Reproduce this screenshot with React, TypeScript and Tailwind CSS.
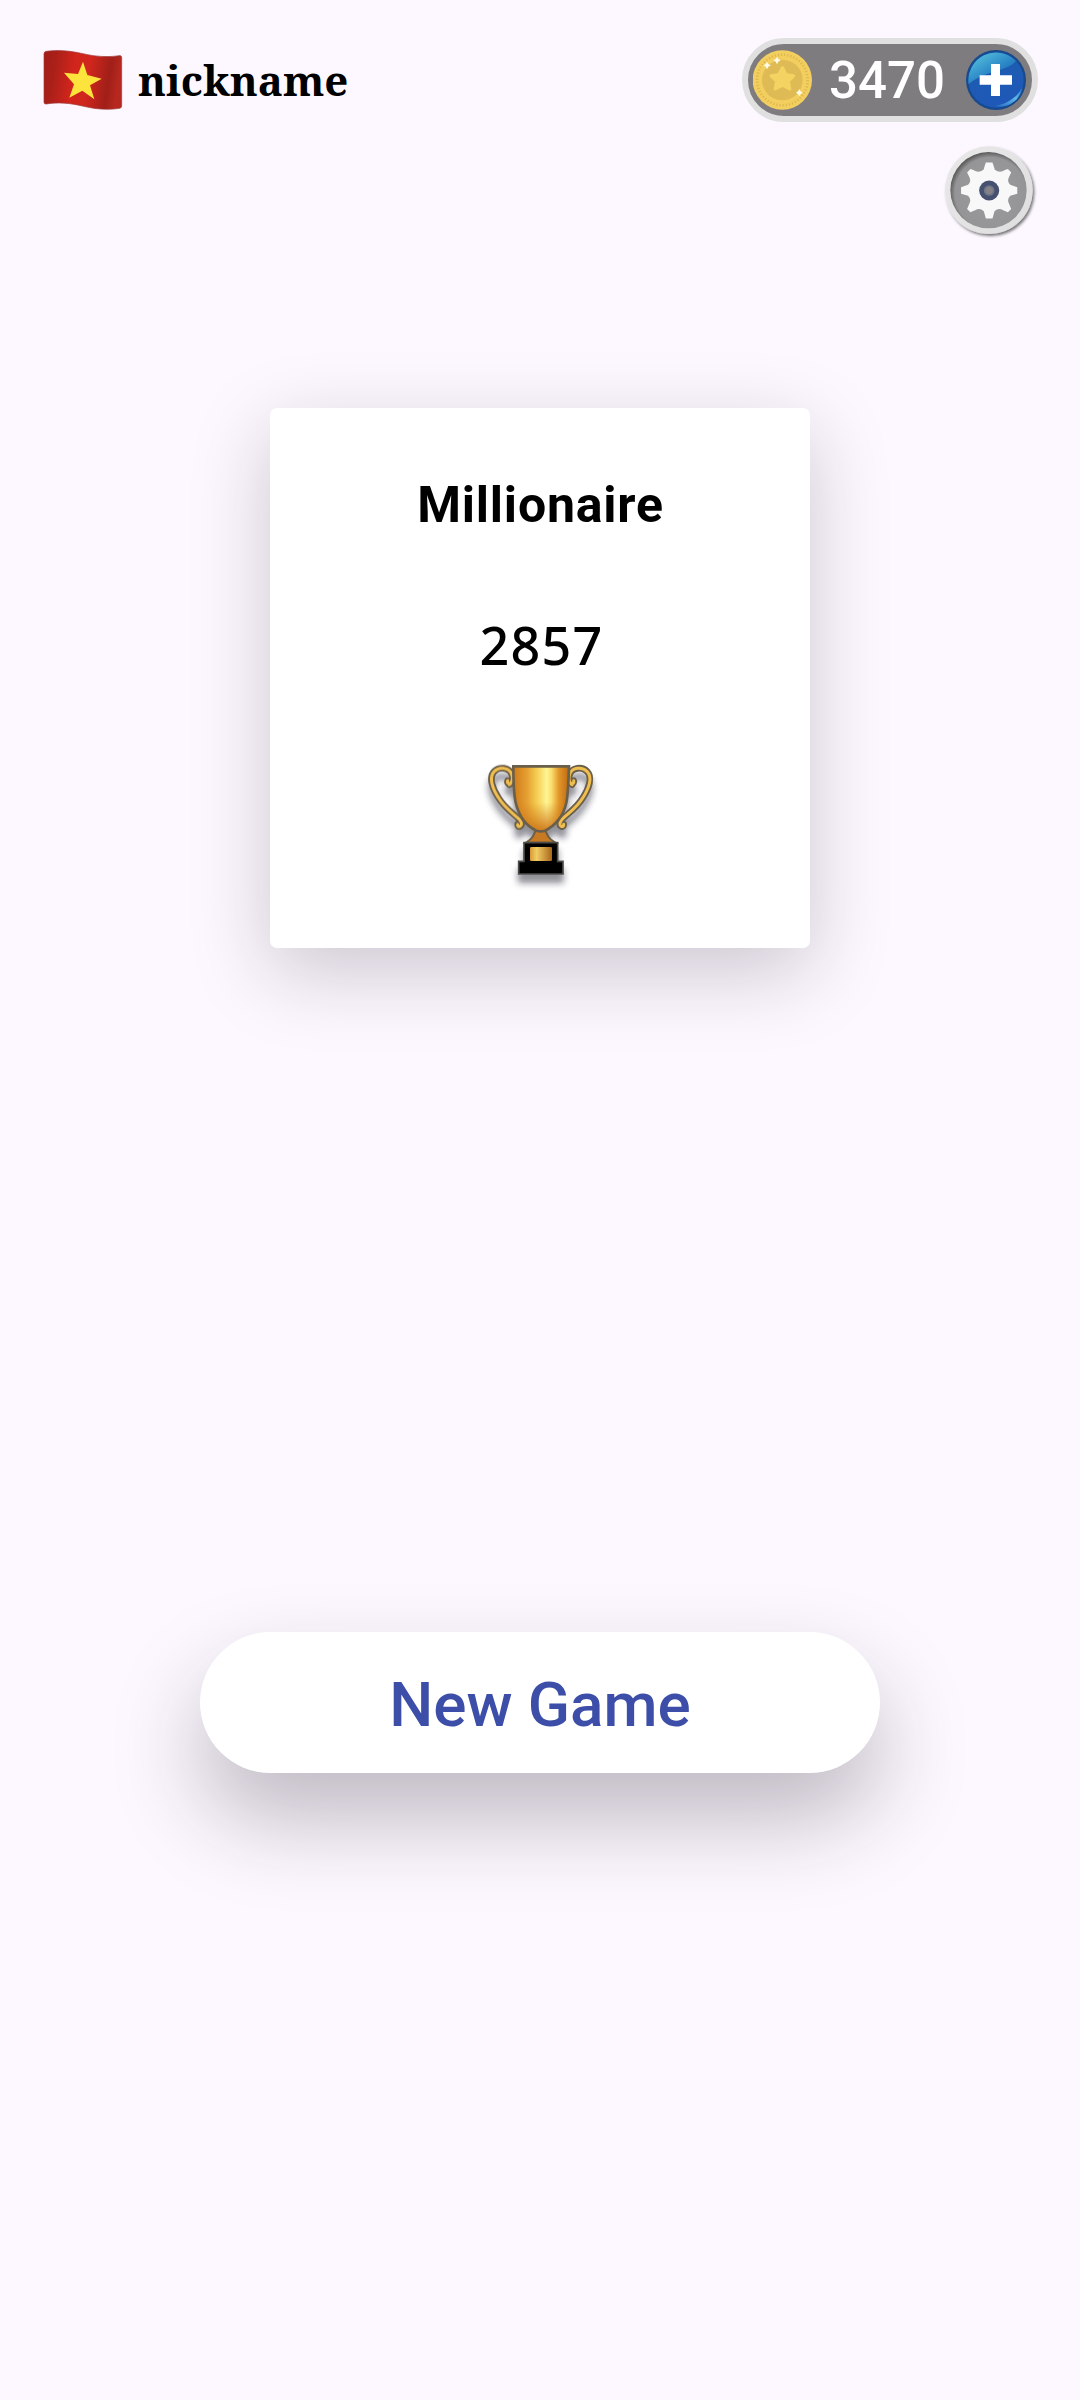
import { memo, type ReactNode } from "react";

const FlagIcon = () => (
  <svg viewBox="0 0 240 186" className="w-20 h-[62px]" aria-hidden="true">
    <defs>
      <linearGradient id="flagFill" x1="0" x2="1" y1="0" y2="0.12">
        <stop offset="0" stopColor="#a31d16" />
        <stop offset="0.16" stopColor="#a92019" />
        <stop offset="0.42" stopColor="#d2251c" />
        <stop offset="0.62" stopColor="#cf261d" />
        <stop offset="0.88" stopColor="#a01f18" />
        <stop offset="1" stopColor="#b5271f" />
      </linearGradient>
    </defs>
    <path
      d="M3 14Q3 8 10 7C45 2 78 5 120 14C158 23 195 25 228 20Q236 19 236 25V171Q236 177 230 178C190 184 155 180 118 171C80 162 45 159 10 165Q3 166 3 160Z"
      fill="url(#flagFill)"
      stroke="#9b3a38"
      strokeWidth="2"
    />
    <path
      d="M120 38L133 78L176 89L141 109L154 151L118 125L79 146L93 106L63 71L105 75Z"
      fill="#fde33c"
    />
  </svg>
);

const CoinIcon = () => (
  <svg viewBox="0 0 180 180" className="size-[60px]" aria-hidden="true">
    <circle cx="88" cy="90" r="89" fill="#f3cf5f" />
    <circle
      cx="88"
      cy="90"
      r="76"
      fill="none"
      stroke="#dfb950"
      strokeWidth="8"
      strokeDasharray="4 5.5"
    />
    <circle cx="88" cy="90" r="61" fill="#dfbb55" />
    <path
      d="M88 48Q92 48 94 53L102 70L122 73Q130 75 125 81L111 95L115 117Q115 124 108 121L88 111L69 121Q61 124 62 116L66 95L51 81Q46 75 54 73L74 70L83 53Q85 48 88 48Z"
      fill="#f5d363"
    />
    <g fill="#fffbe8">
      <path d="M42 35Q44 43 54 46Q44 49 42 58Q40 49 31 46Q40 43 42 35Z" />
      <path d="M72 20Q74 28 83 31Q74 34 72 43Q70 34 61 31Q70 28 72 20Z" />
      <path d="M139 117Q141 125 149 128Q141 131 139 139Q137 131 129 128Q137 125 139 117Z" />
    </g>
  </svg>
);

const PlusIcon = () => (
  <svg viewBox="0 0 180 180" className="size-[60px]" aria-hidden="true">
    <defs>
      <linearGradient id="plusBody" x1="0" x2="0.3" y1="0" y2="1">
        <stop offset="0" stopColor="#1c5fae" />
        <stop offset="1" stopColor="#1f58b8" />
      </linearGradient>
      <linearGradient id="plusGloss" x1="0.1" x2="0.8" y1="0.1" y2="0.9">
        <stop offset="0" stopColor="#55bfdc" />
        <stop offset="0.6" stopColor="#2a86c6" />
        <stop offset="1" stopColor="#1e64b2" />
      </linearGradient>
      <linearGradient id="plusEdge" x1="0" x2="1" y1="1" y2="0">
        <stop offset="0" stopColor="#2368c0" />
        <stop offset="0.6" stopColor="#5fb8ea" />
        <stop offset="1" stopColor="#2a70c4" />
      </linearGradient>
    </defs>
    <circle cx="90" cy="90" r="90" fill="#174a8e" />
    <circle cx="90" cy="90" r="83" fill="url(#plusBody)" />
    <path d="M8 102A83 83 0 0 1 150 33C125 64 60 60 8 102Z" fill="url(#plusGloss)" />
    <path d="M84 168C120 164 154 142 169 112C164 148 130 176 84 168Z" fill="url(#plusEdge)" />
    <path d="M75 42H102V76H138V104H102V138H75V104H41V76H75Z" fill="#fff" />
  </svg>
);

const GearIcon = () => (
  <svg viewBox="0 0 290 290" className="w-[97px] h-[97px]" aria-hidden="true">
    <defs>
      <filter id="gearShadow" x="-10%" y="-10%" width="125%" height="125%">
        <feDropShadow dx="5" dy="6" stdDeviation="4" floodColor="#000" floodOpacity="0.55" />
      </filter>
      <linearGradient id="gearRing" x1="0" x2="1" y1="0" y2="1">
        <stop offset="0" stopColor="#e9e9ea" />
        <stop offset="1" stopColor="#dedede" />
      </linearGradient>
      <radialGradient id="gearPlate" cx="0.53" cy="0.54" r="0.54">
        <stop offset="0" stopColor="#9b9a9c" />
        <stop offset="0.87" stopColor="#959496" />
        <stop offset="1" stopColor="#5c5b5c" />
      </radialGradient>
    </defs>
    <circle cx="143" cy="144" r="131" fill="url(#gearRing)" filter="url(#gearShadow)" />
    <circle cx="142" cy="144" r="114" fill="url(#gearPlate)" />
    <g fill="#f8f8f9" transform="translate(144 145)">
      <path d="M-10 -84H10L17 -62Q32 -51 47 -61L56 -64L66 -54L60 -42Q52 -27 63 -17L84 -10V10L63 16Q52 28 60 41L66 55L56 65L42 59Q28 51 16 62L10 84H-10L-16 62Q-28 51 -42 59L-56 65L-66 55L-60 41Q-52 28 -63 16L-84 10V-10L-63 -17Q-52 -27 -60 -42L-66 -54L-56 -64L-47 -61Q-32 -51 -17 -62Z" />
      <circle r="30" fill="#46516f" />
      <circle r="16" fill="#6c7488" />
      <circle r="11" fill="#858287" />
    </g>
  </svg>
);

// One handle; the other side is the same drawing mirrored around x = 212.
const TrophyHandle = () => (
  <g fill="none" strokeLinecap="round" strokeLinejoin="round">
    <path
      d="M121 132Q110 131 113 122M118 134Q132 121 125 103C118 82 88 79 73 94C55 112 68 146 84 171C104 205 131 221 148 238Q160 254 150 259Q143 262 143 253"
      stroke="#6b5f4c"
      strokeWidth="20"
    />
    <path
      d="M121 132Q110 131 113 122M118 134Q132 121 125 103C118 82 88 79 73 94C55 112 68 146 84 171C104 205 131 221 148 238Q160 254 150 259Q143 262 143 253"
      stroke="#f0bd50"
      strokeWidth="9"
    />
  </g>
);

const TrophyIcon = () => (
  <svg viewBox="0 0 420 480" className="w-[140px] h-[160px]" aria-hidden="true">
    <defs>
      <filter id="trophyShadow" x="-10%" y="-10%" width="120%" height="130%">
        <feDropShadow dx="0" dy="25" stdDeviation="9" floodColor="#1d2030" floodOpacity="0.5" />
      </filter>
      <linearGradient id="cupFill" x1="0" x2="1" y1="0" y2="0">
        <stop offset="0" stopColor="#cf7a17" />
        <stop offset="0.25" stopColor="#e6a033" />
        <stop offset="0.42" stopColor="#f5cd52" />
        <stop offset="0.6" stopColor="#fff595" />
        <stop offset="0.68" stopColor="#fbe070" />
        <stop offset="0.82" stopColor="#e29628" />
        <stop offset="1" stopColor="#bd6912" />
      </linearGradient>
      <linearGradient id="cupShade" x1="0" x2="0" y1="0" y2="1">
        <stop offset="0.55" stopColor="#cf7b1b" stopOpacity="0" />
        <stop offset="1" stopColor="#cb7418" stopOpacity="0.95" />
      </linearGradient>
      <linearGradient id="plateFill" x1="0" x2="1" y1="0" y2="0">
        <stop offset="0" stopColor="#d79a35" />
        <stop offset="0.3" stopColor="#f2cd63" />
        <stop offset="1" stopColor="#a9661c" />
      </linearGradient>
    </defs>
    <g filter="url(#trophyShadow)">
      <TrophyHandle />
      <g transform="translate(424 0) scale(-1 1)">
        <TrophyHandle />
      </g>
      <path
        d="M197 264H226Q228 292 256 308H168Q195 292 197 264Z"
        fill="#c87a22"
        stroke="#6b5f4c"
        strokeWidth="6"
      />
      <path
        d="M130 79H297C296 115 295 158 289 188C280 229 254 259 225 272Q212 276 199 272C170 259 147 229 137 188C130 158 130 115 130 79Z"
        fill="url(#cupFill)"
      />
      <path
        d="M130 79H297C296 115 295 158 289 188C280 229 254 259 225 272Q212 276 199 272C170 259 147 229 137 188C130 158 130 115 130 79Z"
        fill="url(#cupShade)"
        stroke="#6b5f4c"
        strokeWidth="8"
      />
      <path
        d="M162 308H263V364H279V402H146V364H162Z"
        fill="#000"
        stroke="#4e4c49"
        strokeWidth="5"
      />
    </g>
    <rect x="180" y="321" width="66" height="42" rx="4" fill="url(#plateFill)" />
  </svg>
);

const CoinBalance = memo(({ coins }: { coins: number }) => (
  <div className="flex items-center w-[296px] h-[84px] pl-[5px] pr-1.5 rounded-full border-6 border-[#e1e0e1] bg-[#7f7c7f]">
    <CoinIcon />
    <span className="flex-1 pr-[5px] text-center font-medium text-[51px] leading-none text-white">
      {coins}
    </span>
    <button type="button" aria-label="Add coins">
      <PlusIcon />
    </button>
  </div>
));
CoinBalance.displayName = "CoinBalance";

const ScoreCard = ({ title, score, children }: { title: string; score: number; children: ReactNode }) => (
  <section className="flex flex-col items-center size-[540px] pt-[67px] rounded-[7px] bg-white shadow-[0_24px_80px_rgba(25,20,35,0.21)]">
    <h2 className="pl-px font-bold text-[50px] leading-[60px] tracking-[0.8px] text-black">{title}</h2>
    <p className="mt-[74px] pl-[3px] font-['Noto_Sans',sans-serif] font-medium text-[52px] leading-[72px] tracking-[1.2px] text-black">
      {score}
    </p>
    <div className="mt-[59px]">{children}</div>
  </section>
);

export default function App() {
  return (
    <main className="flex flex-col items-center w-[1080px] h-[2400px] bg-[#fdf8ff] font-[Roboto,sans-serif]">
      <header className="flex items-start justify-between w-full h-[408px] pt-[38px] pl-[43px] pr-[42px]">
        <div className="flex items-center pt-[11px]">
          <FlagIcon />
          <span className="ml-[15px] font-['Noto_Serif','DejaVu_Serif_Condensed','DejaVu_Serif',serif] font-bold text-[42px] leading-[62px] text-black">
            nickname
          </span>
        </div>
        <div className="flex flex-col items-end">
          <CoinBalance coins={3470} />
          <button type="button" aria-label="Settings" className="mt-5">
            <GearIcon />
          </button>
        </div>
      </header>

      <ScoreCard title="Millionaire" score={2857}>
        <TrophyIcon />
      </ScoreCard>

      <button
        type="button"
        className="mt-[684px] w-[680px] h-[141px] pt-[5px] rounded-full bg-white font-medium text-[62px] leading-none text-[#3c4ea8] shadow-[0_45px_90px_rgba(30,20,35,0.28)]"
      >
        New Game
      </button>
    </main>
  );
}
